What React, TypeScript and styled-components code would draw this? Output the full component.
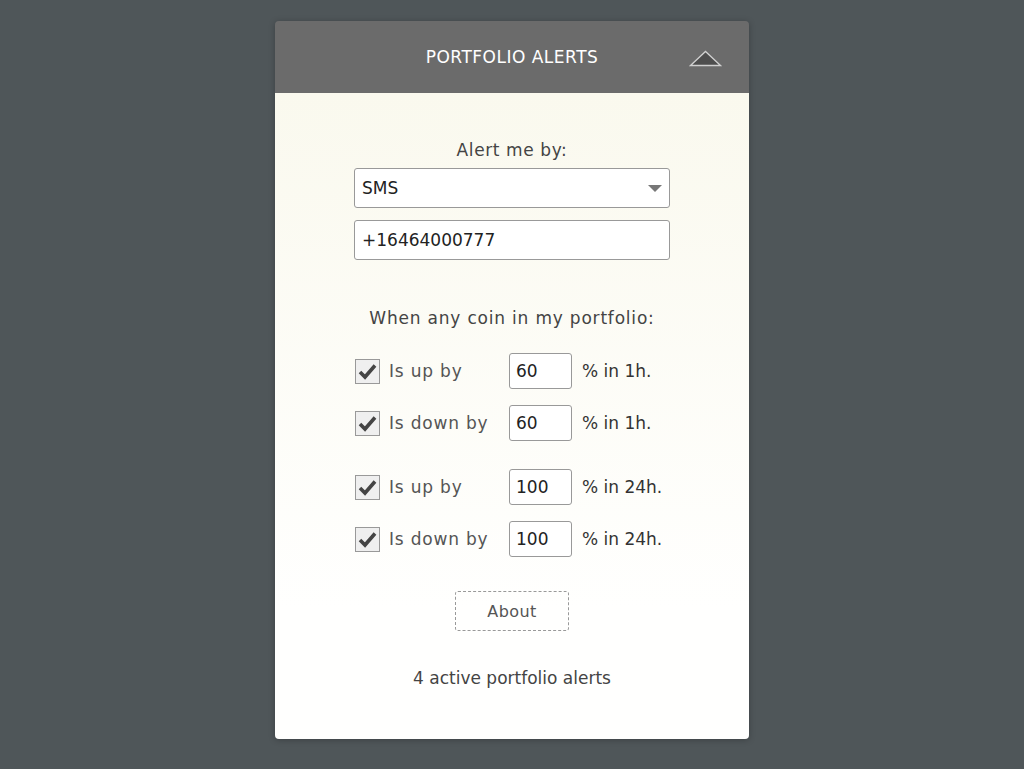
import React from "react";
import styled, { createGlobalStyle } from "styled-components";

const Global = createGlobalStyle`
  html, body { margin: 0; padding: 0; }
  body {
    background: #4f5659;
    font-family: "DejaVu Sans", "Noto Sans", sans-serif;
    color: #444;
  }
`;

const Page = styled.div`
  min-height: 769px;
  display: flex;
  justify-content: center;
  align-items: flex-start;
  padding-top: 21px;
  box-sizing: border-box;
`;

const Panel = styled.div`
  width: 474px;
  border-radius: 4px;
  overflow: hidden;
  box-shadow: 0 1px 6px rgba(0, 0, 0, 0.25);
`;

const Header = styled.div`
  height: 72px;
  background: #6b6b6b;
  display: flex;
  align-items: center;
  justify-content: center;
  position: relative;
  color: #fff;
  font-size: 17px;
  letter-spacing: 0.5px;
`;

const Toggle = styled.svg`
  position: absolute;
  right: 27px;
  top: 29px;
`;

const Body = styled.div`
  background: linear-gradient(#faf9ee, #fffffe 80%);
  padding: 45px 0 49px;
  display: flex;
  flex-direction: column;
  align-items: center;
`;

const Label = styled.div<{ $mt?: number; $ls?: number }>`
  font-size: 17px;
  line-height: 24px;
  letter-spacing: ${(p) => p.$ls ?? 0.6}px;
  margin-top: ${(p) => p.$mt ?? 0}px;
  color: #444;
`;

const Field = styled.div<{ $mt: number }>`
  width: 316px;
  height: 40px;
  box-sizing: border-box;
  border: 1px solid #999;
  border-radius: 3px;
  background: #fff;
  margin-top: ${(p) => p.$mt}px;
  display: flex;
  align-items: center;
  padding: 0 7px;
  font-size: 17px;
  color: #222;
  justify-content: space-between;
`;

const Caret = styled.span`
  width: 0;
  height: 0;
  border-left: 7px solid transparent;
  border-right: 7px solid transparent;
  border-top: 7px solid #777;
`;

const Row = styled.div<{ $mt: number }>`
  width: 316px;
  height: 36px;
  margin-top: ${(p) => p.$mt}px;
  display: grid;
  grid-template-columns: 34px 120px 63px auto;
  align-items: center;
  padding-left: 1px;
  box-sizing: border-box;
`;

const Check = styled.span`
  width: 25px;
  height: 25px;
  box-sizing: border-box;
  border: 1px solid #999;
  background: #efefef;
  display: flex;
  align-items: center;
  justify-content: center;
`;

const RowLabel = styled.span`
  font-size: 17px;
  letter-spacing: 0.8px;
  color: #555;
`;

const Num = styled.span`
  height: 36px;
  box-sizing: border-box;
  border: 1px solid #999;
  border-radius: 3px;
  background: #fff;
  display: flex;
  align-items: center;
  padding-left: 6px;
  font-size: 17px;
  color: #222;
`;

const Suffix = styled.span`
  font-size: 17px;
  color: #333;
  padding-left: 10px;
`;

const AboutButton = styled.div`
  margin-top: 34px;
  width: 114px;
  height: 40px;
  box-sizing: border-box;
  border: 1px dashed #999;
  border-radius: 3px;
  display: flex;
  align-items: center;
  justify-content: center;
  font-size: 16px;
  letter-spacing: 0.4px;
  color: #555;
`;

const CheckMark = () => (
  <svg width="19" height="17" viewBox="0 0 19 17">
    <path d="M2 9 L7 14 L17 2.5" fill="none" stroke="#444" strokeWidth="3.6" />
  </svg>
);

const rows = [
  { label: "Is up by", value: "60", suffix: "% in 1h.", mt: 23 },
  { label: "Is down by", value: "60", suffix: "% in 1h.", mt: 16 },
  { label: "Is up by", value: "100", suffix: "% in 24h.", mt: 28 },
  { label: "Is down by", value: "100", suffix: "% in 24h.", mt: 16 },
];

export default function App() {
  return (
    <>
      <Global />
      <Page>
        <Panel>
          <Header>
            PORTFOLIO ALERTS
            <Toggle width="33" height="17" viewBox="0 0 33 17">
              <polygon points="1.5,15.5 16.5,1.5 31.5,15.5" fill="#4e4e4e" stroke="#d0d0d0" strokeWidth="1.3" />
            </Toggle>
          </Header>
          <Body>
            <Label>Alert me by:</Label>
            <Field $mt={6}>
              SMS
              <Caret />
            </Field>
            <Field $mt={12}>+16464000777</Field>
            <Label $mt={46} $ls={0.8}>When any coin in my portfolio:</Label>
            {rows.map((r, i) => (
              <Row key={i} $mt={r.mt}>
                <Check>
                  <CheckMark />
                </Check>
                <RowLabel>{r.label}</RowLabel>
                <Num>{r.value}</Num>
                <Suffix>{r.suffix}</Suffix>
              </Row>
            ))}
            <AboutButton>About</AboutButton>
            <Label $mt={35} $ls={0}>4 active portfolio alerts</Label>
          </Body>
        </Panel>
      </Page>
    </>
  );
}
